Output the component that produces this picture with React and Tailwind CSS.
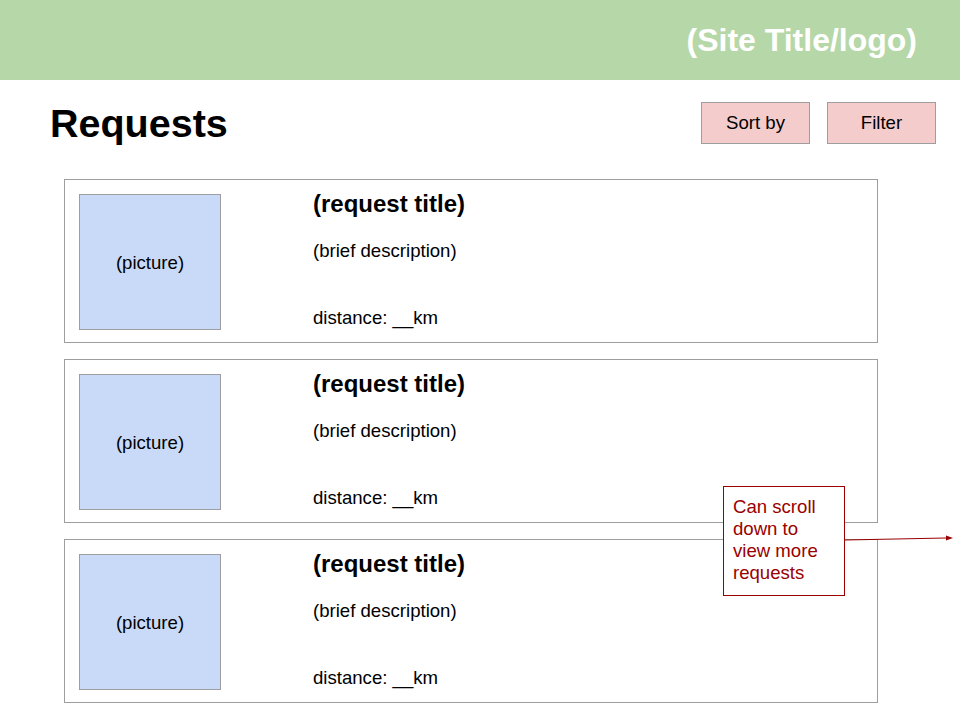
const font = { fontFamily: '"Liberation Sans", Arial, sans-serif' }

function RequestCard() {
    return (
        <div className="flex h-[164px] w-[814px] border border-[#9e9e9e] bg-white pl-[14px] pt-[14px]">
            <div className="flex h-[136px] w-[142px] shrink-0 items-center justify-center border border-[#9e9e9e] bg-[#c9daf8] pt-[2px] text-[18.6px] text-black">
                (picture)
            </div>
            <div className="ml-[92px] flex flex-col">
                <h2 className="-mt-[4px] text-[24px] font-bold leading-[28px] text-black">(request title)</h2>
                <p className="mt-[23px] text-[18.6px] leading-[20px] text-black">(brief description)</p>
                <p className="mt-[47px] text-[18.6px] leading-[20px] text-black">distance: __km</p>
            </div>
        </div>
    )
}

export default function App() {
    return (
        <div className="relative h-[720px] w-[960px] overflow-hidden bg-white" style={font}>
            <header className="flex h-20 items-center justify-end bg-[#b6d7a8] pr-[43px]">
                <span className="text-[32px] font-bold text-white">(Site Title/logo)</span>
            </header>

            <div className="flex items-center justify-between pl-[50px] pr-[24px] pt-[22px]">
                <h1 className="text-[39.5px] font-bold leading-[42px] text-black">Requests</h1>
                <div className="flex gap-[17px]">
                    <button className="h-[42px] w-[109px] border border-[#9e9e9e] bg-[#f4cccc] text-[18.6px] text-black">Sort by</button>
                    <button className="h-[42px] w-[109px] border border-[#9e9e9e] bg-[#f4cccc] text-[18.6px] text-black">Filter</button>
                </div>
            </div>

            <div className="ml-[64px] mt-[35px] flex flex-col gap-[16px]">
                <RequestCard />
                <RequestCard />
                <RequestCard />
            </div>

            {/* annotation note over the list */}
            <div className="absolute left-[723px] top-[486px] h-[110px] w-[122px] border border-[#990000] bg-white px-[9px] pt-[9px] text-[18.6px] leading-[22px] text-[#990000]">
                Can scroll down to view more requests
            </div>
            <svg className="absolute left-[844px] top-[532px]" width="116" height="14" viewBox="0 0 116 14">
                <line x1="1" y1="8" x2="102" y2="6" stroke="#990000" strokeWidth="1.2" />
                <polygon points="102,3.5 109,6 102,8.5" fill="#990000" />
            </svg>
        </div>
    )
}
